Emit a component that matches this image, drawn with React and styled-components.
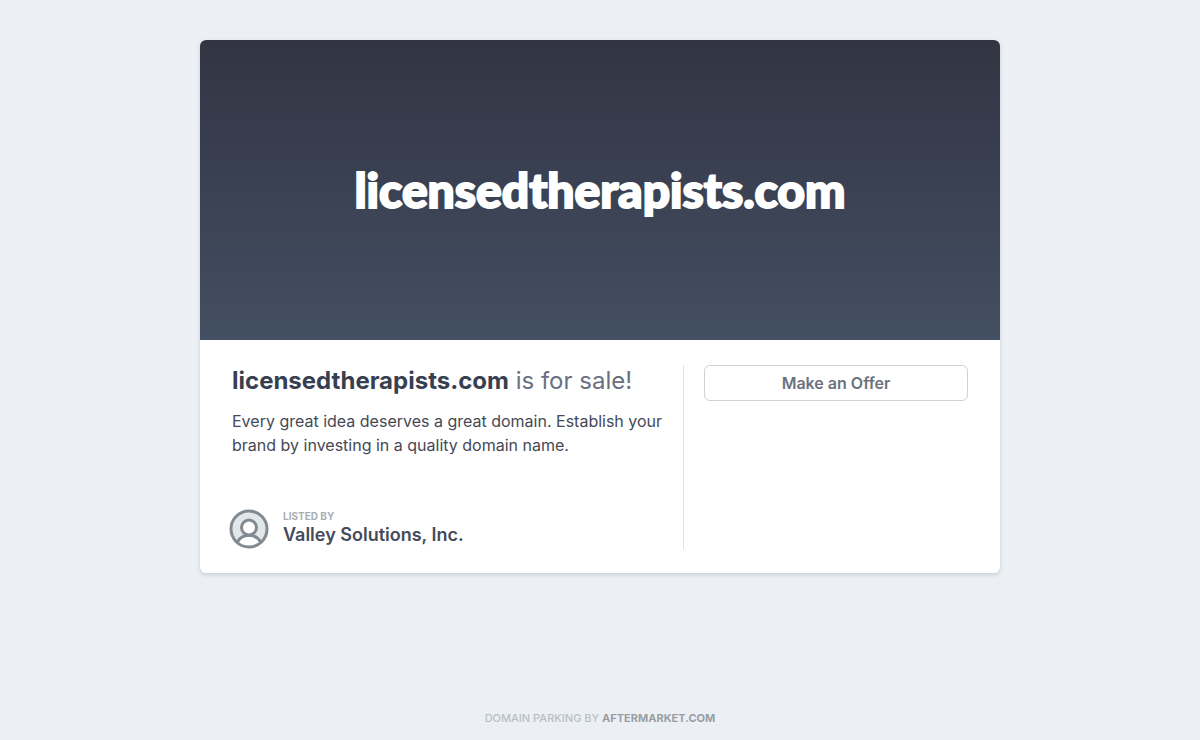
import React from "react";
import styled, { createGlobalStyle } from "styled-components";

const GlobalStyle = createGlobalStyle`
  * {
    box-sizing: border-box;
  }
  body {
    margin: 0;
    background: #ecf0f5;
    color: #454956;
    font-family: Inter, "Liberation Sans", sans-serif;
    font-size: 16px;
    line-height: 24px;
  }
`;

const Page = styled.div`
  display: flex;
  flex-direction: column;
  align-items: center;
  min-height: 100vh;
  padding: 40px 20px 12px;
`;

const Card = styled.main`
  width: 100%;
  max-width: 800px;
  overflow: hidden;
  background: white;
  border-radius: 6px;
  box-shadow: 0 2px 4px rgba(50, 55, 70, 0.18);
`;

const Hero = styled.div`
  display: flex;
  align-items: center;
  justify-content: center;
  min-height: 300px;
  padding: 20px;
  background: linear-gradient(#323443, #434f62);
  color: white;
  font-family: Lato, "Open Sans", sans-serif;
  font-size: 48px;
  font-weight: 900;
  line-height: 60px;
  -webkit-text-stroke: 2px white;
`;

const Body = styled.div`
  display: flex;
  padding: 25px 32px 24px;

  @media (max-width: 700px) {
    flex-direction: column;
    gap: 20px;
  }
`;

const Info = styled.section`
  display: flex;
  flex: 1;
  flex-direction: column;
  justify-content: space-between;
  gap: 52px;
  padding-right: 20px;
  border-right: 1px solid #dfe1e5;

  @media (max-width: 700px) {
    padding-right: 0;
    border-right: 0;
  }
`;

const Title = styled.h1`
  margin: 0 0 12px;
  color: #6b7080;
  font-size: 24px;
  font-weight: 400;
  line-height: 32px;

  strong {
    color: #383f50;
    font-weight: 700;
  }
`;

const Description = styled.p`
  margin: 0;
`;

const Seller = styled.div`
  display: flex;
  align-items: center;
  gap: 14px;
  margin-left: -3px;
`;

const SellerLabel = styled.div`
  color: #aaaeb4;
  font-size: 10px;
  font-weight: 700;
  line-height: 12px;
  text-transform: uppercase;
`;

const SellerName = styled.div`
  color: #454b5a;
  font-size: 18px;
  font-weight: 600;
  line-height: 26px;
`;

const Actions = styled.section`
  flex: 0 0 284px;
  padding-left: 20px;

  @media (max-width: 700px) {
    flex: none;
    padding-left: 0;
  }
`;

const OfferButton = styled.button`
  width: 100%;
  height: 36px;
  background: white;
  border: 1px solid #cfd1d4;
  border-radius: 6px;
  color: #6b727d;
  font-family: inherit;
  font-size: 16px;
  font-weight: 600;
  cursor: pointer;
`;

const Footer = styled.footer`
  margin-top: auto;
  color: #b9bec3;
  font-size: 11px;
  font-weight: 500;
  line-height: 20px;
  text-transform: uppercase;

  a {
    color: #989ea4;
    font-weight: 700;
    text-decoration: none;
  }
`;

function Avatar() {
  return (
    <svg width="40" height="40" viewBox="0 0 40 40" fill="none" aria-hidden="true">
      <circle cx="20" cy="20" r="18" fill="#e2e7ea" />
      <path
        d="M8 33.5c2.5-4.5 6.8-7.2 12-7.2s9.5 2.7 12 7.2A18 18 0 0 1 8 33.5z"
        fill="white"
      />
      <g stroke="#838991" strokeWidth="3">
        <circle cx="20" cy="20" r="18" />
        <path d="M8 33.5c2.5-4.5 6.8-7.2 12-7.2s9.5 2.7 12 7.2" />
        <circle cx="20" cy="18.5" r="7.5" fill="white" />
      </g>
    </svg>
  );
}

export default function App() {
  const domain = "licensedtherapists.com";

  return (
    <>
      <GlobalStyle />
      <Page>
        <Card>
          <Hero>{domain}</Hero>
          <Body>
            <Info>
              <div>
                <Title>
                  <strong>{domain}</strong> is for sale!
                </Title>
                <Description>
                  Every great idea deserves a great domain. Establish your brand
                  by investing in a quality domain name.
                </Description>
              </div>
              <Seller>
                <Avatar />
                <div>
                  <SellerLabel>Listed by</SellerLabel>
                  <SellerName>Valley Solutions, Inc.</SellerName>
                </div>
              </Seller>
            </Info>
            <Actions>
              <OfferButton type="button">Make an Offer</OfferButton>
            </Actions>
          </Body>
        </Card>
        <Footer>
          Domain parking by <a href="#aftermarket">Aftermarket.com</a>
        </Footer>
      </Page>
    </>
  );
}
